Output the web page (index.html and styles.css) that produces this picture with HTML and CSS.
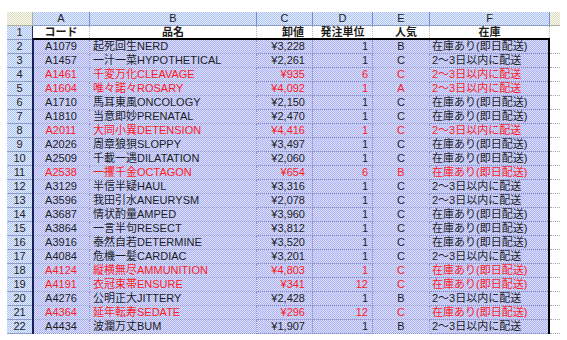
FILE: index.html
```html
<!DOCTYPE html>
<html lang="ja">
<head>
<meta charset="utf-8">
<title>在庫一覧</title>
<link rel="stylesheet" href="styles.css">
</head>
<body>
<div class="sheet">
  <div class="row hdr">
    <div class="corner"></div><div>A</div><div>B</div><div>C</div><div>D</div><div>E</div><div>F</div><div class="ghdr"></div>
  </div>
  <div class="row head">
    <div class="rh">1</div><div class="c">コード</div><div class="hn">品名</div><div class="hp">卸値</div><div class="hq">発注単位</div><div class="hr">人気</div><div class="hs">在庫</div><div class="g"></div>
  </div>
  <div class="row"><div class="rh">2</div><div class="c">A1079</div><div class="n">起死回生NERD</div><div class="p">¥3,228</div><div class="q">1</div><div class="r">B</div><div class="s">在庫あり(即日配送)</div><div class="g"></div></div>
  <div class="row"><div class="rh">3</div><div class="c">A1457</div><div class="n">一汁一菜HYPOTHETICAL</div><div class="p">¥2,261</div><div class="q">1</div><div class="r">C</div><div class="s">2〜3日以内に配送</div><div class="g"></div></div>
  <div class="row red"><div class="rh">4</div><div class="c">A1461</div><div class="n">千変万化CLEAVAGE</div><div class="p">¥935</div><div class="q">6</div><div class="r">C</div><div class="s">2〜3日以内に配送</div><div class="g"></div></div>
  <div class="row red"><div class="rh">5</div><div class="c">A1604</div><div class="n">唯々諾々ROSARY</div><div class="p">¥4,092</div><div class="q">1</div><div class="r">A</div><div class="s">2〜3日以内に配送</div><div class="g"></div></div>
  <div class="row"><div class="rh">6</div><div class="c">A1710</div><div class="n">馬耳東風ONCOLOGY</div><div class="p">¥2,150</div><div class="q">1</div><div class="r">C</div><div class="s">在庫あり(即日配送)</div><div class="g"></div></div>
  <div class="row"><div class="rh">7</div><div class="c">A1810</div><div class="n">当意即妙PRENATAL</div><div class="p">¥2,470</div><div class="q">1</div><div class="r">C</div><div class="s">在庫あり(即日配送)</div><div class="g"></div></div>
  <div class="row red"><div class="rh">8</div><div class="c">A2011</div><div class="n">大同小異DETENSION</div><div class="p">¥4,416</div><div class="q">1</div><div class="r">C</div><div class="s">2〜3日以内に配送</div><div class="g"></div></div>
  <div class="row"><div class="rh">9</div><div class="c">A2026</div><div class="n">周章狼狽SLOPPY</div><div class="p">¥3,497</div><div class="q">1</div><div class="r">C</div><div class="s">在庫あり(即日配送)</div><div class="g"></div></div>
  <div class="row"><div class="rh">10</div><div class="c">A2509</div><div class="n">千載一遇DILATATION</div><div class="p">¥2,060</div><div class="q">1</div><div class="r">C</div><div class="s">在庫あり(即日配送)</div><div class="g"></div></div>
  <div class="row red"><div class="rh">11</div><div class="c">A2538</div><div class="n">一攫千金OCTAGON</div><div class="p">¥654</div><div class="q">6</div><div class="r">B</div><div class="s">在庫あり(即日配送)</div><div class="g"></div></div>
  <div class="row"><div class="rh">12</div><div class="c">A3129</div><div class="n">半信半疑HAUL</div><div class="p">¥3,316</div><div class="q">1</div><div class="r">C</div><div class="s">2〜3日以内に配送</div><div class="g"></div></div>
  <div class="row"><div class="rh">13</div><div class="c">A3596</div><div class="n">我田引水ANEURYSM</div><div class="p">¥2,078</div><div class="q">1</div><div class="r">C</div><div class="s">2〜3日以内に配送</div><div class="g"></div></div>
  <div class="row"><div class="rh">14</div><div class="c">A3687</div><div class="n">情状酌量AMPED</div><div class="p">¥3,960</div><div class="q">1</div><div class="r">C</div><div class="s">在庫あり(即日配送)</div><div class="g"></div></div>
  <div class="row"><div class="rh">15</div><div class="c">A3864</div><div class="n">一言半句RESECT</div><div class="p">¥3,812</div><div class="q">1</div><div class="r">C</div><div class="s">在庫あり(即日配送)</div><div class="g"></div></div>
  <div class="row"><div class="rh">16</div><div class="c">A3916</div><div class="n">泰然自若DETERMINE</div><div class="p">¥3,520</div><div class="q">1</div><div class="r">C</div><div class="s">在庫あり(即日配送)</div><div class="g"></div></div>
  <div class="row"><div class="rh">17</div><div class="c">A4084</div><div class="n">危機一髪CARDIAC</div><div class="p">¥3,201</div><div class="q">1</div><div class="r">C</div><div class="s">2〜3日以内に配送</div><div class="g"></div></div>
  <div class="row red"><div class="rh">18</div><div class="c">A4124</div><div class="n">縦横無尽AMMUNITION</div><div class="p">¥4,803</div><div class="q">1</div><div class="r">C</div><div class="s">在庫あり(即日配送)</div><div class="g"></div></div>
  <div class="row red"><div class="rh">19</div><div class="c">A4191</div><div class="n">衣冠束帯ENSURE</div><div class="p">¥341</div><div class="q">12</div><div class="r">C</div><div class="s">在庫あり(即日配送)</div><div class="g"></div></div>
  <div class="row"><div class="rh">20</div><div class="c">A4276</div><div class="n">公明正大JITTERY</div><div class="p">¥2,428</div><div class="q">1</div><div class="r">B</div><div class="s">2〜3日以内に配送</div><div class="g"></div></div>
  <div class="row red"><div class="rh">21</div><div class="c">A4364</div><div class="n">延年転寿SEDATE</div><div class="p">¥296</div><div class="q">12</div><div class="r">C</div><div class="s">在庫あり(即日配送)</div><div class="g"></div></div>
  <div class="row"><div class="rh">22</div><div class="c">A4434</div><div class="n">波瀾万丈BUM</div><div class="p">¥1,907</div><div class="q">1</div><div class="r">B</div><div class="s">2〜3日以内に配送</div><div class="g"></div></div>
  <div class="sel"></div>
</div>
</body>
</html>
```

FILE: styles.css
```css
html, body {
  margin: 0;
  padding: 0;
}
body {
  width: 567px;
  height: 340px;
  overflow: hidden;
  background: #fff;
  font-family: "Liberation Sans", "Noto Sans CJK JP", sans-serif;
  font-size: 11px;
  color: #1c1c1c;
}
.sheet {
  position: relative;
  margin: 12px 0 0 7px;
  width: 553px;
}
.row {
  display: grid;
  grid-template-columns: 26px 57px 167px 56px 60px 57px 120px 10px;
  height: 14px;
  line-height: 13px;
}
.row > div {
  box-sizing: border-box;
  white-space: nowrap;
  overflow: hidden;
  border-right: 1px dotted #8e93c4;
  border-bottom: 1px dotted #8e93c4;
  background: repeating-conic-gradient(#adb4f0 0 25%, #dadefc 0 50%) 0 0 / 2px 2px;
}
.hdr > div {
  text-align: center;
  color: #222;
  border-right: 1px solid #6f8ee0;
  border-bottom: 1px solid #8c9cc8;
  background: repeating-conic-gradient(#aec4f2 0 25%, #e4ecff 0 50%) 0 0 / 2px 2px;
}
.hdr > .corner,
.hdr > .ghdr,
.head > .rh {
  border-right: 1px solid #b0b09c;
  border-bottom: 1px solid #b0b09c;
  background: repeating-conic-gradient(#dcdcc0 0 25%, #fbfbf2 0 50%) 0 0 / 2px 2px;
}
.hdr > .ghdr {
  border-right: 0;
}
.rh {
  text-align: center;
  color: #222;
}
.row > .rh {
  border-right: 1px solid #24306e;
  border-bottom: 1px solid #8c9cc8;
  background: repeating-conic-gradient(#aec4f2 0 25%, #e4ecff 0 50%) 0 0 / 2px 2px;
}
.head > div {
  background: #fff;
  font-weight: bold;
  border-right: 1px dotted #b8b8b8;
  border-bottom: 0;
}
.head > .rh {
  font-weight: normal;
}
.row > .g {
  background: #fff;
  border-right: 0;
  border-bottom: 1px dotted #a8a8a8;
}
.head > .g {
  border-bottom: 0;
}
.c { text-align: center; }
.n { padding-left: 3px; }
.p { text-align: right; padding-right: 7px; }
.q { text-align: right; padding-right: 4px; }
.r { text-align: center; }
.s { padding-left: 2px; }
.hn { text-align: center; }
.hp { text-align: right; padding-right: 8px; }
.hq { text-align: center; }
.hr { text-align: center; padding-left: 10px; }
.hs { text-align: center; }
.red > div:not(.rh) {
  color: #ff1a1a;
}
.sel {
  position: absolute;
  left: 25px;
  top: 26px;
  width: 518px;
  height: 296px;
  box-sizing: border-box;
  border-top: 2px solid #000;
  border-right: 2px solid #000;
  border-left: 2px solid #14205a;
  pointer-events: none;
}
```
